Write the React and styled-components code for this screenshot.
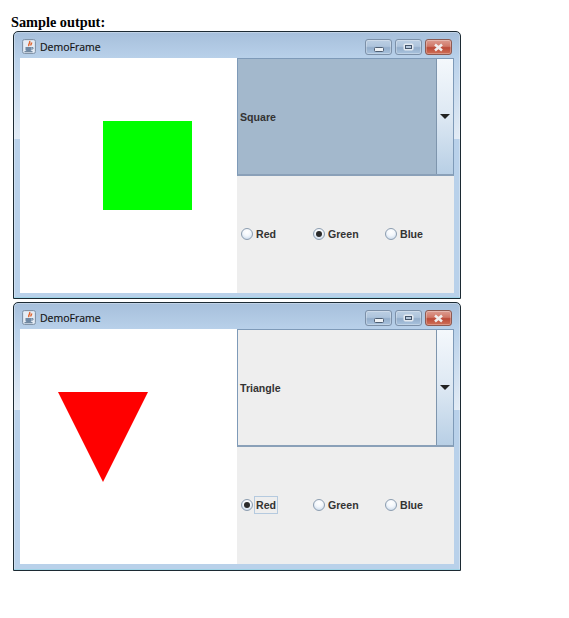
import React from "react";
import styled, { createGlobalStyle } from "styled-components";

const Global = createGlobalStyle`
  html, body { margin: 0; padding: 0; background: #fff; }
`;

const Page = styled.div`
  width: 569px;
  height: 618px;
  overflow: hidden;
  padding: 13px 0 0 11px;
  box-sizing: border-box;
`;

const Heading = styled.div`
  font: bold 14.3px/18px "Liberation Serif", serif;
  color: #000;
  height: 18px;
`;

const Stack = styled.div`
  display: flex;
  flex-direction: column;
  gap: 3px;
  margin-left: 2px;
`;

const Frame = styled.div`
  width: 448px;
  height: ${(p) => p.$height}px;
  box-sizing: border-box;
  border: 1px solid #1c2a33;
  border-radius: 5px 5px 0 0;
  background:
    linear-gradient(180deg, #b9d1ea 0, #e2ebf5 100%) 0 26px / 6px 81px no-repeat,
    linear-gradient(180deg, #b9d1ea 0, #e2ebf5 100%) 100% 26px / 6px 81px no-repeat,
    linear-gradient(180deg, #a6bfdb 0, #b9d1ea 27px, #b9d1ea 100%);
  box-shadow: inset 0 0 0 1px rgba(255, 255, 255, 0.3), inset 0 -1px 0 #74c0dc;
  display: flex;
  flex-direction: column;
`;

const TitleBar = styled.div`
  height: 26px;
  flex: none;
  box-sizing: border-box;
  display: flex;
  align-items: center;
  padding: 3px 8px 0 8px;
  gap: 4px;
`;

const Title = styled.span`
  font: 10.5px "Open Sans", sans-serif;
  color: #111;
  flex: 1;
  -webkit-text-stroke: 0.15px #111;
`;

const Controls = styled.div`
  display: flex;
  gap: 3px;
  align-self: flex-start;
  margin-top: 4px;
`;

const Control = styled.div`
  width: 27px;
  height: 16px;
  box-sizing: border-box;
  border: 1px solid ${(p) => (p.$close ? "#8c5a52" : "#7c90a8")};
  border-radius: 3px;
  box-shadow: inset 0 0 0 1px rgba(255, 255, 255, 0.28);
  background: ${(p) =>
    p.$close
      ? "linear-gradient(180deg, #dd9c90 0, #d07868 45%, #bb4a38 55%, #cf7058 100%)"
      : "linear-gradient(180deg, #bccfe3 0, #aec4dc 45%, #94aecb 55%, #a9c3de 100%)"};
  display: flex;
  align-items: ${(p) => (p.$low ? "flex-end" : "center")};
  padding-bottom: ${(p) => (p.$low ? "2px" : "0")};
  justify-content: center;
`;

const Body = styled.div`
  height: 235px;
  margin: 0 6px;
  display: grid;
  grid-template-columns: 217px 217px;
`;

const Canvas = styled.svg`
  display: block;
  width: 217px;
  height: 235px;
  background: #fff;
`;

const Side = styled.div`
  display: grid;
  grid-template-columns: minmax(0, 1fr);
  grid-template-rows: 118px 117px;
  background: #eee;
`;

const Combo = styled.div`
  display: flex;
  box-sizing: border-box;
  border: 1px solid #7e9ab8;
  border-bottom-width: 2px;
  border-bottom-color: #8aa0b8;
`;

const ComboValue = styled.div`
  flex: 1;
  display: flex;
  align-items: center;
  padding-left: 2px;
  font: bold 10.6px "Liberation Sans", sans-serif;
  color: #333;
  background: ${(p) => (p.$selected ? "#a3b8cc" : "#eee")};
`;

const ArrowButton = styled.div`
  width: 16px;
  flex: none;
  border-left: 1px solid #7e95ad;
  background: linear-gradient(180deg, #f4f8fc 0, #dde8f3 50%, #b8cfe5 100%);
  display: flex;
  align-items: center;
  justify-content: center;
`;

const Arrow = styled.div`
  width: 0;
  height: 0;
  border-left: 5px solid transparent;
  border-right: 5px solid transparent;
  border-top: 5px solid #222;
`;

const RadioRow = styled.div`
  display: flex;
  align-items: center;
  padding-left: 4px;
  padding-bottom: 1px;
`;

const RadioItem = styled.div`
  width: 72px;
  flex: none;
  display: flex;
  align-items: center;
  gap: 1px;
`;

const RadioCircle = styled.div`
  width: 12px;
  height: 12px;
  box-sizing: border-box;
  border-radius: 50%;
  border: 1px solid #8c9db0;
  background: radial-gradient(circle at 50% 30%, #fff 0, #f2f6fb 45%, #bfd2e6 100%);
  display: flex;
  align-items: center;
  justify-content: center;
`;

const RadioDot = styled.div`
  width: 6px;
  height: 6px;
  border-radius: 50%;
  background: #2a2a2a;
`;

const RadioLabel = styled.span`
  font: bold 10.6px/14px "Liberation Sans", sans-serif;
  color: #333;
  padding: 1px 1px;
  border: 1px solid ${(p) => (p.$focus ? "#b5cadf" : "transparent")};
`;

const JavaIcon = () => (
  <svg width="14" height="15" viewBox="0 0 14 15">
    <rect x="0.500" y="0.500" width="13" height="14" rx="2" fill="#c9d6e6" stroke="#8294a8" />
    <rect x="1.500" y="1.500" width="11" height="12" rx="1" fill="#e6ecf4" />
    <path d="M7.500 2c1.500 1.800-2 2.800-.5 5M9.500 3.500c.5 1-1 1.500-.5 3" fill="none" stroke="#e0642e" strokeWidth="1.500" />
    <path d="M3.500 8h6v2.500a1.500 1.500 0 0 1-1.500 1.500h-3a1.500 1.500 0 0 1-1.500-1.500z" fill="#6f88a3" />
    <path d="M9.500 8.500h1.500v1.500h-1.500" fill="none" stroke="#6f88a3" />
    <path d="M2.500 12.700h8" stroke="#56708c" />
  </svg>
);

const MinIcon = () => (
  <svg width="10" height="5" viewBox="0 0 10 5">
    <rect x="0.500" y="0.500" width="9" height="4" rx="1" fill="#eef2f6" stroke="#4e5f73" />
  </svg>
);

const MaxIcon = () => (
  <svg width="11" height="8" viewBox="0 0 11 8">
    <rect x="1" y="1" width="9" height="6" rx="1" fill="#dfe7f0" stroke="#e8edf3" />
    <rect x="2.500" y="2.500" width="6" height="3" fill="#b6c8dc" stroke="#43546a" />
  </svg>
);

const CloseIcon = () => (
  <svg width="11" height="9" viewBox="0 0 11 9">
    <path d="M2 1.500l7 6M9 1.500l-7 6" stroke="#f0eeee" strokeWidth="2.600" />
  </svg>
);

const Radio = ({ label, checked, focus }) => (
  <RadioItem>
    <RadioCircle>{checked && <RadioDot />}</RadioCircle>
    <RadioLabel $focus={focus}>{label}</RadioLabel>
  </RadioItem>
);

const DemoFrame = ({ height, shape, value, selected, color }) => (
  <Frame $height={height}>
    <TitleBar>
      <JavaIcon />
      <Title>DemoFrame</Title>
      <Controls>
        <Control $low><MinIcon /></Control>
        <Control><MaxIcon /></Control>
        <Control $close><CloseIcon /></Control>
      </Controls>
    </TitleBar>
    <Body>
      <Canvas viewBox="0 0 217 235">{shape}</Canvas>
      <Side>
        <Combo>
          <ComboValue $selected={selected}>{value}</ComboValue>
          <ArrowButton><Arrow /></ArrowButton>
        </Combo>
        <RadioRow>
          <Radio label="Red" checked={color === "red"} focus={color === "red"} />
          <Radio label="Green" checked={color === "green"} />
          <Radio label="Blue" checked={color === "blue"} />
        </RadioRow>
      </Side>
    </Body>
  </Frame>
);

export default function App() {
  return (
    <Page>
      <Global />
      <Heading>Sample output:</Heading>
      <Stack>
        <DemoFrame
          height={268}
          value="Square"
          selected
          color="green"
          shape={<rect x="83" y="63" width="89" height="89" fill="#00ff00" />}
        />
        <DemoFrame
          height={269}
          value="Triangle"
          color="red"
          shape={<polygon points="38,63 128,63 83,153" fill="#ff0000" />}
        />
      </Stack>
    </Page>
  );
}
